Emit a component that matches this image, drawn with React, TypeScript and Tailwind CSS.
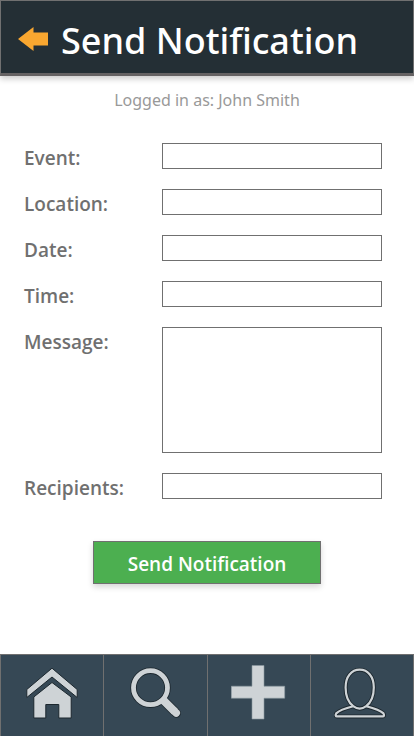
import type { ReactNode } from "react";

const fields = [
  { id: "event", label: "Event:" },
  { id: "location", label: "Location:" },
  { id: "date", label: "Date:" },
  { id: "time", label: "Time:" },
  { id: "message", label: "Message:", multiline: true },
  { id: "recipients", label: "Recipients:" },
];

function Icon({ children }: { children: ReactNode }) {
  return (
    <svg viewBox="0 0 56 56" className="size-14" fill="none" aria-hidden="true">
      {children}
    </svg>
  );
}

function HomeIcon() {
  return (
    <Icon>
      <g fill="#ced3d6" stroke="#1c272e" strokeWidth="1">
        <path d="M28 3.2 2.8 24.5v8L28 12l25.2 20.5v-8Z" />
        <path d="M28 17.5 9.8 32v21h12V39.5h13V53h12.4V32Z" />
      </g>
    </Icon>
  );
}

function SearchIcon() {
  return (
    <Icon>
      <g stroke="#1c272e">
        <circle cx="23.5" cy="22.7" r="17" strokeWidth="6.4" />
        <path d="m38 36.8 10 10" strokeWidth="9.6" />
        <path d="m48.2 47 1.2 1.2" strokeWidth="9" strokeLinecap="round" />
      </g>
      <g stroke="#ced3d6">
        <circle cx="23.5" cy="22.7" r="17" strokeWidth="4.8" />
        <path d="m36.5 35.3 11.5 11.5" strokeWidth="8" />
        <path d="m47.6 46.4 1.6 1.6" strokeWidth="7.6" strokeLinecap="round" />
      </g>
    </Icon>
  );
}

function PlusIcon() {
  return (
    <Icon>
      <path
        d="M21 .5h12v20.7h20.7v12H33V54H21V33.2H.3v-12H21Z"
        fill="#ced3d6"
        stroke="#8a979f"
        strokeWidth=".6"
      />
    </Icon>
  );
}

function UserIcon() {
  const outline =
    "M19.2 41.2C13.8 37 11.6 29.5 11.6 22.5 11.6 11.5 17.5 4.7 25.7 4.7s14.1 6.8 14.1 17.8c0 7-2.2 14.5-7.6 18.7 8.3 2.1 14.3 4.2 17.3 7.2.8 1.5.8 3-.8 3H3c-1.6 0-1.6-1.5-.8-3 3-3 8.7-5.1 17-7.2ZM19.2 41.2c4.3 3.2 8.7 3.2 13 0";
  return (
    <Icon>
      <path d={outline} stroke="#1c272e" strokeWidth="4" strokeLinejoin="round" />
      <path d={outline} stroke="#ced3d6" strokeWidth="2.2" strokeLinejoin="round" />
    </Icon>
  );
}

const tabs = [
  { label: "Home", icon: <HomeIcon /> },
  { label: "Search", icon: <SearchIcon /> },
  { label: "Add", icon: <PlusIcon /> },
  { label: "Profile", icon: <UserIcon /> },
];

export default function App() {
  return (
    <div className="flex min-h-screen flex-col bg-white font-['Open_Sans','Noto_Sans',sans-serif] text-[#707070]">
      <header className="flex h-19 items-center border border-b-3 border-[#707070] border-b-[#656263] bg-[#242f35] pt-1 pl-4 shadow-[0_3px_6px_rgba(0,0,0,0.2)]">
        <button type="button" aria-label="Back" className="shrink-0">
          <svg viewBox="0 0 32 26" className="h-[26px] w-8" aria-hidden="true">
            <path d="M1 13 16.5 1v5.5H31v13H16.5V25Z" fill="#f9a730" />
          </svg>
        </button>
        <h1 className="ml-3 pt-1 font-['Noto_Sans',sans-serif] text-[36px] leading-[50px] font-medium whitespace-nowrap text-white">
          Send Notification
        </h1>
      </header>

      <main className="grow px-6">
        <p className="mt-3 text-center font-['Noto_Sans',sans-serif] text-base text-[#999999]">Logged in as: John Smith</p>

        <form className="mt-[31px]" onSubmit={(e) => e.preventDefault()}>
          <div className="flex flex-col gap-5 pr-2">
            {fields.map(({ id, label, multiline }) => (
              <div key={id} className="flex items-start">
                <label htmlFor={id} className="h-[26px] w-[138px] shrink-0 text-[19px] leading-[30px] font-semibold">
                  {label}
                </label>
                {multiline ? (
                  <textarea id={id} className="h-[126px] min-w-0 grow resize-none border border-[#707070] px-2 py-1" />
                ) : (
                  <input id={id} type="text" className="h-[26px] min-w-0 grow border border-[#707070] px-2" />
                )}
              </div>
            ))}
          </div>
          <button
            type="submit"
            className="mx-auto mt-[42px] block h-[43px] w-[228px] border border-[#707070] bg-[#4caf50] pt-1 text-[19px] font-semibold text-white shadow-[0_3px_6px_rgba(0,0,0,0.16)]"
          >
            Send Notification
          </button>
        </form>
      </main>

      <nav className="flex h-[82px] divide-x divide-[#707070] border border-b-0 border-[#707070] bg-[#364855]">
        {tabs.map(({ label, icon }) => (
          <button key={label} type="button" aria-label={label} className="flex flex-1 items-start justify-center pt-[10px]">
            {icon}
          </button>
        ))}
      </nav>
    </div>
  );
}
